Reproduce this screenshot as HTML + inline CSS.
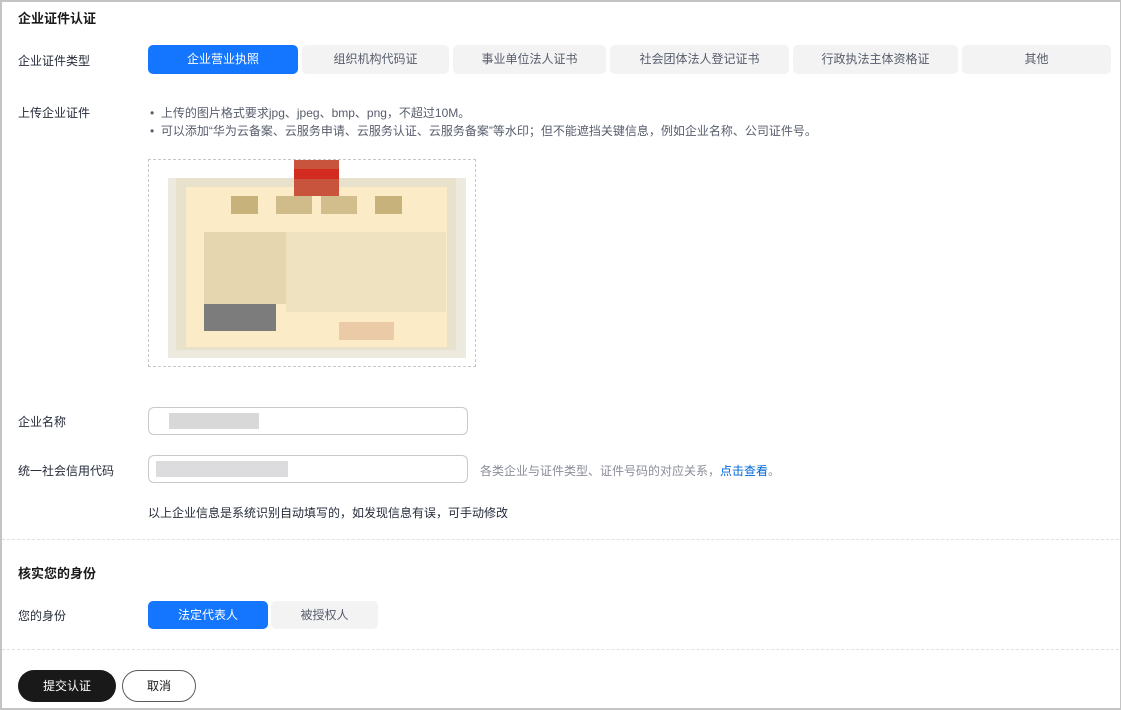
<!DOCTYPE html>
<html><head><meta charset="utf-8"><style>
*{margin:0;padding:0;box-sizing:border-box}
body{width:1121px;height:710px;background:#fff;font-family:"Liberation Sans","Noto Sans CJK SC",sans-serif;font-size:12px;color:#252b3a;position:relative;overflow:hidden}
.frame{position:absolute;left:0;top:0;width:1121px;height:710px;border:2px solid #c4c4c4;border-right-width:1px}
.a{position:absolute}
.h{font-size:13px;font-weight:bold;color:#191919}
.lbl{color:#252b3a}
.tab{position:absolute;top:45px;height:29px;border-radius:5px;background:#f3f3f3;color:#575d6c;text-align:center;line-height:29px;font-size:12px}
.on{background:#1476ff;color:#fff}
.inp{position:absolute;left:148px;width:320px;height:28px;border:1px solid #c9c9c9;border-radius:6px}
.dash{position:absolute;left:2px;right:2px;border-top:1px dashed #dfe1e6}
.m{position:absolute}
</style></head><body>
<div class="frame"></div>
<div class="a h" style="left:18px;top:8px">企业证件认证</div>
<div class="a lbl" style="left:18px;top:52px">企业证件类型</div>
<div class="tab on" style="left:148px;width:150px">企业营业执照</div>
<div class="tab" style="left:302px;width:147px">组织机构代码证</div>
<div class="tab" style="left:453px;width:153px">事业单位法人证书</div>
<div class="tab" style="left:610px;width:179px">社会团体法人登记证书</div>
<div class="tab" style="left:793px;width:165px">行政执法主体资格证</div>
<div class="tab" style="left:962px;width:149px">其他</div>
<div class="a lbl" style="left:18px;top:104px">上传企业证件</div>
<div class="a" style="left:150px;top:104px;color:#575d6c;line-height:18px">
<div>•&nbsp;&nbsp;上传的图片格式要求jpg、jpeg、bmp、png，不超过10M。</div>
<div>•&nbsp;&nbsp;可以添加“华为云备案、云服务申请、云服务认证、云服务备案”等水印；但不能遮挡关键信息，例如企业名称、公司证件号。</div>
</div>
<div class="a" style="left:148px;top:159px;width:328px;height:208px;border:1px dashed #c8c8c8">
<div class="m" style="left:19px;top:18px;width:298px;height:180px;background:#ece9df"></div>
<div class="m" style="left:27px;top:18px;width:280px;height:172px;background:#e8e2cc"></div>
<div class="m" style="left:37px;top:27px;width:261px;height:160px;background:#fbebc6"></div>
<div class="m" style="left:145px;top:0;width:45px;height:36px;background:#c8543e"></div>
<div class="m" style="left:145px;top:9px;width:45px;height:10px;background:#d42b20"></div>
<div class="m" style="left:82px;top:36px;width:27px;height:18px;background:#c8b27c"></div>
<div class="m" style="left:127px;top:36px;width:36px;height:18px;background:#d0bb8a"></div>
<div class="m" style="left:172px;top:36px;width:36px;height:18px;background:#d2be8d"></div>
<div class="m" style="left:226px;top:36px;width:27px;height:18px;background:#c8b27c"></div>
<div class="m" style="left:55px;top:72px;width:82px;height:72px;background:#e5d6b0"></div>
<div class="m" style="left:137px;top:72px;width:160px;height:80px;background:#efe2c0"></div>
<div class="m" style="left:55px;top:144px;width:72px;height:27px;background:#7c7c7c"></div>
<div class="m" style="left:190px;top:162px;width:55px;height:18px;background:#ebcba7"></div>
</div>
<div class="a lbl" style="left:18px;top:413px">企业名称</div>
<div class="inp" style="top:407px"><div class="m" style="left:20px;top:5px;width:90px;height:16px;background:#d8d8d8"></div></div>
<div class="a lbl" style="left:18px;top:462px">统一社会信用代码</div>
<div class="inp" style="top:455px"><div class="m" style="left:7px;top:5px;width:132px;height:16px;background:#dcdcde"></div></div>
<div class="a" style="left:480px;top:462px;color:#8a8e99">各类企业与证件类型、证件号码的对应关系，<span style="color:#0066d9">点击查看</span>。</div>
<div class="a lbl" style="left:148px;top:504px">以上企业信息是系统识别自动填写的，如发现信息有误，可手动修改</div>
<div class="dash" style="top:539px"></div>
<div class="a h" style="left:18px;top:563px">核实您的身份</div>
<div class="a lbl" style="left:18px;top:607px">您的身份</div>
<div class="tab on" style="left:148px;top:601px;width:120px;height:28px;line-height:28px">法定代表人</div>
<div class="tab" style="left:271px;top:601px;width:107px;height:28px;line-height:28px">被授权人</div>
<div class="dash" style="top:649px"></div>
<div class="a" style="left:18px;top:670px;width:98px;height:32px;border-radius:16px;background:#191919;color:#fff;text-align:center;line-height:32px">提交认证</div>
<div class="a" style="left:122px;top:670px;width:74px;height:32px;border-radius:16px;border:1px solid #5a5a5a;color:#191919;text-align:center;line-height:30px">取消</div>
</body></html>
